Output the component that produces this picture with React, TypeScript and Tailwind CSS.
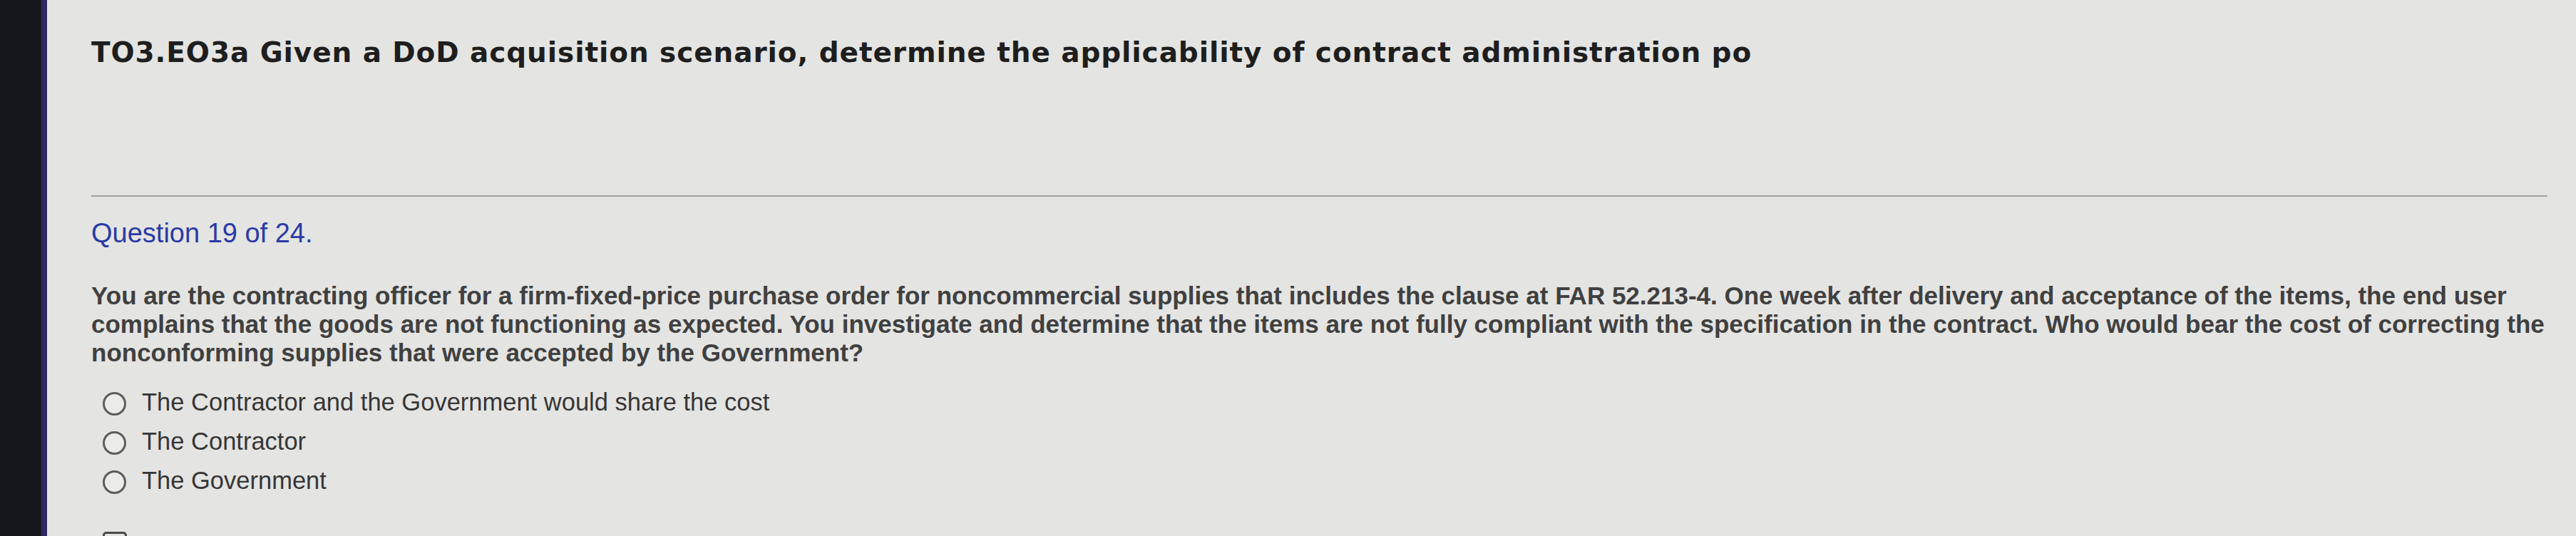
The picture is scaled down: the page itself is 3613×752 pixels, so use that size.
const options = [
  'The Contractor and the Government would share the cost',
  'The Contractor',
  'The Government',
];

export default function App() {
  return (
    <div className="flex h-[752px] w-full overflow-hidden bg-[#e4e4e2]">
      {/* dark window edge */}
      <div className="w-[66px] shrink-0 border-r-[8px] border-[#2f2860] bg-[#15171c]" />

      <div className="flex-1 pl-[62px] pr-[8px]">
        <div className="mr-[32px] h-[276px] border-b-2 border-[#a2a2a2] pt-[52px]">
          <h1 className="whitespace-nowrap font-['DejaVu_Sans',sans-serif] text-[39px] font-bold leading-[44px] tracking-[0.9px] text-[#1e1e1e]">
            TO3.EO3a Given a DoD acquisition scenario, determine the applicability of contract administration po
          </h1>
        </div>

        <div className="mt-[29px] font-['Liberation_Sans',Arial,sans-serif] text-[38px] leading-[44px] text-[#2a3aa6]">
          Question 19 of 24.
        </div>

        <p className="mt-[46px] font-['Liberation_Sans',Arial,sans-serif] text-[35px] font-bold leading-[40px] text-[#404040]">
          You are the contracting officer for a firm-fixed-price purchase order for noncommercial supplies that includes the
          clause at FAR 52.213-4. One week after delivery and acceptance of the items, the end user complains that the goods
          are not functioning as expected. You investigate and determine that the items are not fully compliant with the
          specification in the contract. Who would bear the cost of correcting the nonconforming supplies that were accepted
          by the Government?
        </p>

        <div className="mt-[30px] pl-[16px]">
          {options.map((o) => (
            <label key={o} className="flex h-[55px] items-start gap-[22px]">
              <span className="mt-[5px] h-[33px] w-[33px] shrink-0 rounded-full border-[3px] border-[#5c5c5c] bg-[#ebebea]" />
              <span className="-mt-[8px] font-['Liberation_Sans',Arial,sans-serif] text-[34.5px] leading-[55px] text-[#363636]">
                {o}
              </span>
            </label>
          ))}
        </div>

        <div className="ml-[16px] mt-[36px] h-[24px] w-[34px] rounded-[5px] border-[3px] border-[#4a4a4a]" />
      </div>
    </div>
  );
}
